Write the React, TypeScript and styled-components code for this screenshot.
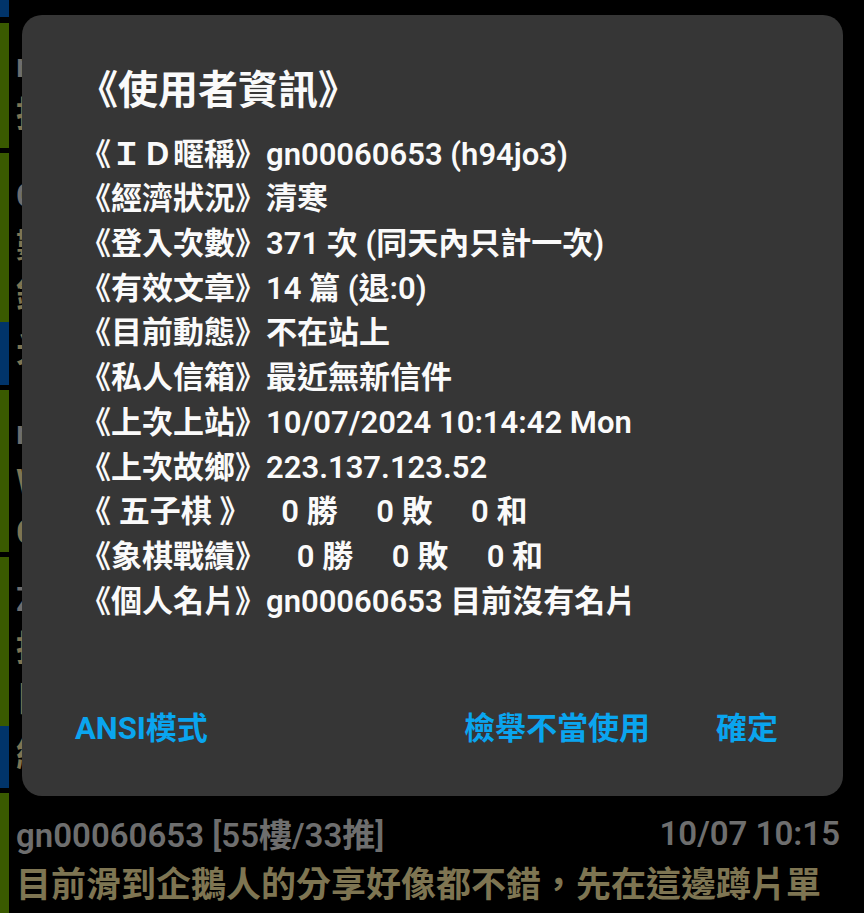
import styled, { createGlobalStyle } from 'styled-components'

const GlobalStyle = createGlobalStyle`
	html, body {
		margin: 0;
		padding: 0;
		background: #000;
	}
	body {
		font-family: Roboto, "Noto Sans CJK TC", sans-serif;
		overflow: hidden;
	}
`

const Screen = styled.div`
	position: relative;
	width: 864px;
	height: 913px;
	background: #000;
	overflow: hidden;
`

const Feed = styled.div`
	display: flex;
	flex-direction: column;
	gap: 5px;
`

interface SectionProps {
	readonly $bar: 'green' | 'blue'
	readonly $h: number
	readonly $top: number
}

const Section = styled.div<SectionProps>`
	box-sizing: border-box;
	height: ${({ $h }) => $h}px;
	overflow: hidden;
	border-left: 9px solid ${({ $bar }) => $bar === 'green' ? '#3a5a00' : '#01346a'};
	padding: ${({ $top }) => $top}px 24px 0 7px;
`

const PostCard = styled.div`
	display: flex;
	flex-direction: column;
`

const Tail = styled(Section)`
	margin-bottom: 1px;
`

const Header = styled.div`
	display: flex;
	justify-content: space-between;
	align-items: center;
	height: 44px;
	margin-bottom: 6px;
	color: #6e6e6e;
	font-size: 33px;
	font-weight: 600;
	white-space: nowrap;
`

const Line = styled.div`
	color: #7e7552;
	font-size: 35px;
	font-weight: 600;
	line-height: 50px;
	white-space: nowrap;
`

const Overlay = styled.div`
	position: absolute;
	left: 22px;
	top: 15px;
	width: 821px;
	height: 781px;
	box-sizing: border-box;
	background: #363636;
	border-radius: 20px;
	display: flex;
	flex-direction: column;
	padding: 52px 0 43px 0;
	color: #fafafa;
`

const Title = styled.div`
	padding-left: 56px;
	font-size: 40px;
	font-weight: 600;
	line-height: 48px;
	margin-bottom: 17.6px;
`

const InfoList = styled.div`
	display: flex;
	flex-direction: column;
	padding-left: 58px;
`

const InfoRow = styled.div`
	font-size: 31px;
	font-weight: 600;
	line-height: 44.7px;
	white-space: pre;
`

const Actions = styled.div`
	margin-top: auto;
	display: flex;
	align-items: center;
	padding: 0 65px 0 53px;
	gap: 66px;
`

const Action = styled.div`
	color: #0aa5ef;
	font-size: 31px;
	font-weight: 700;
	line-height: 48px;
	white-space: nowrap;

	&:first-child {
		margin-right: auto;
	}
`

type Post = {
	id: string
	floor: string
	time: string
	lines: string[]
	h: number
	reply?: string[]
	rh?: number
}

const posts: Post[] = [
	{ id: 'rainbowcat', floor: '[51樓/30推]', time: '10/07 09:58', lines: ['推薦看看這部，節奏很好'], h: 125 },
	{ id: 'Cyndi0413', floor: '[52樓/30推]', time: '10/07 10:02', lines: ['數到第三集就停不下來了', '鏡頭語言真的很厲害'], h: 169, reply: ['光是配樂就值得一看'], rh: 63 },
	{ id: 'rockmania', floor: '[53樓/31推]', time: '10/07 10:06', lines: ['Wednesday 第二季呢', 'Coco 也很推'], h: 162 },
	{ id: 'Zeroxx77', floor: '[54樓/32推]', time: '10/07 10:11', lines: ['推一下樓上的片單', '目前看了三部都不錯'], h: 169, reply: ['給大家參考'], rh: 62 },
	{ id: 'gn00060653', floor: '[55樓/33推]', time: '10/07 10:15', lines: ['目前滑到企鵝人的分享好像都不錯，先在這邊蹲片單'], h: 160 },
]

const info = [
	'《ＩＤ暱稱》gn00060653 (h94jo3)',
	'《經濟狀況》清寒',
	'《登入次數》371 次 (同天內只計一次)',
	'《有效文章》14 篇 (退:0)',
	'《目前動態》不在站上',
	'《私人信箱》最近無新信件',
	'《上次上站》10/07/2024 10:14:42 Mon',
	'《上次故鄉》223.137.123.52',
	'《 五子棋 》    0 勝     0 敗     0 和',
	'《象棋戰績》    0 勝     0 敗     0 和',
	'《個人名片》gn00060653 目前沒有名片',
]

const PostItem = ({ post }: { post: Post }) => <PostCard>
	<Section $bar="green" $h={post.h} $top={18}>
		<Header>
			<span>{post.id} {post.floor}</span>
			<span>{post.time}</span>
		</Header>
		{post.lines.map((l, i) => <Line key={i}>{l}</Line>)}
	</Section>
	{post.reply && <Section $bar="blue" $h={post.rh ?? 62} $top={4}>
		{post.reply.map((l, i) => <Line key={i}>{l}</Line>)}
	</Section>}
</PostCard>

export default function App() {
	return <>
		<GlobalStyle />
		<Screen>
			<Feed>
				<Tail $bar="blue" $h={17} $top={0} />
				{posts.map(p => <PostItem key={p.id} post={p} />)}
			</Feed>

			<Overlay>
				<Title>《使用者資訊》</Title>
				<InfoList>
					{info.map((row, i) => <InfoRow key={i}>{row}</InfoRow>)}
				</InfoList>
				<Actions>
					<Action>ANSI模式</Action>
					<Action>檢舉不當使用</Action>
					<Action>確定</Action>
				</Actions>
			</Overlay>
		</Screen>
	</>
}
